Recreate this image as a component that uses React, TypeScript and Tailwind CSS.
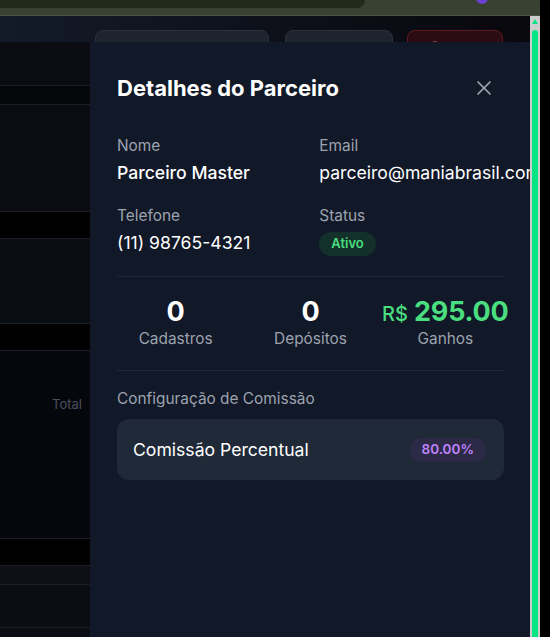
import { X, Download, RefreshCw, Trash2 } from "lucide-react";

function Row({ h, bg, children }: { h: string; bg: string; children?: React.ReactNode }) {
  return <div className={`${h} ${bg} border-b border-[#1b1e25] shrink-0`}>{children}</div>;
}

export default function App() {
  return (
    <div className="w-[550px] h-[637px] flex overflow-hidden bg-black font-['Inter',sans-serif]">
      <div className="w-[540px] flex flex-col">
        {/* browser top strip */}
        <div className="h-4 shrink-0 relative bg-[#394130] border-b border-[#4b5340] overflow-hidden">
          <div className="h-2 w-[365px] bg-[#222a1c] rounded-br-[10px]" />
          <div className="absolute left-[476px] top-[-8px] w-3 h-3 rounded-full bg-[#6b3fcf]" />
        </div>
        <div className="flex flex-1 min-h-0">
          {/* page */}
          <div className="w-[530px] relative overflow-hidden flex flex-col">
            <div className="h-[26px] shrink-0 bg-gradient-to-r from-[#131a28] to-[#08080d] flex items-start pt-[14px]">
              <div className="ml-[95px] w-[174px] h-10 rounded-lg bg-[#1e232d] border border-[#2b303b] flex items-start pt-[10px] pl-[20px] text-white">
                <Download size={14} />
              </div>
              <div className="ml-4 w-[108px] h-10 rounded-lg bg-[#1e232d] border border-[#2b303b] flex items-start pt-[10px] pl-[21px] text-white">
                <RefreshCw size={14} />
              </div>
              <div className="ml-[14px] w-[96px] h-10 rounded-lg bg-[#2a0c12] border border-[#5e1a20] flex items-start pt-[10px] pl-[20px] text-[#f87171]">
                <Trash2 size={14} />
              </div>
            </div>
            <Row h="h-[44px]" bg="bg-[#0a0c12]" />
            <Row h="h-[19px]" bg="bg-[#06070b]" />
            <Row h="h-[107px]" bg="bg-[#0b0c13]" />
            <Row h="h-[27px]" bg="bg-black" />
            <Row h="h-[85px]" bg="bg-[#0b0d15]" />
            <Row h="h-[27px]" bg="bg-[#010101]" />
            <Row h="h-[188px]" bg="bg-[#05070c]">
              <div className="w-[82px] pt-[43px] text-right text-[13px] leading-5 text-[#4b5060]">Total</div>
            </Row>
            <Row h="h-[27px]" bg="bg-black" />
            <Row h="h-[19px]" bg="bg-[#0e1016]" />
            <Row h="h-[43px]" bg="bg-[#0b0d14]" />
            <div className="flex-1 bg-[#0b0d14]" />

            {/* drawer panel */}
            <div className="absolute left-[90px] top-[26px] bottom-0 w-[440px] bg-[#111827] overflow-hidden pl-[27px] pr-[26px] pt-[31px]">
              <div className="flex items-center justify-between h-[30px]">
                <h2 className="text-[22px] leading-[30px] font-bold text-white">Detalhes do Parceiro</h2>
                <X size={24} strokeWidth={1.75} className="text-[#9ca3af] mr-[8px]" />
              </div>

              <div className="mt-[32px] grid grid-cols-2 gap-x-[17.6px] gap-y-[19px] pb-[20px] border-b border-[#1f2937]">
                <div>
                  <div className="text-[15.4px] leading-[22px] text-[#9ca3af]">Nome</div>
                  <div className="mt-[3px] text-[17.6px] leading-[26px] font-medium text-white whitespace-nowrap">Parceiro Master</div>
                </div>
                <div>
                  <div className="text-[15.4px] leading-[22px] text-[#9ca3af]">Email</div>
                  <div className="mt-[3px] text-[17.6px] leading-[26px] text-white whitespace-nowrap">parceiro@maniabrasil.com</div>
                </div>
                <div>
                  <div className="text-[15.4px] leading-[22px] text-[#9ca3af]">Telefone</div>
                  <div className="mt-[3px] text-[17.6px] leading-[26px] text-white whitespace-nowrap">(11) 98765-4321</div>
                </div>
                <div>
                  <div className="text-[15.4px] leading-[22px] text-[#9ca3af]">Status</div>
                  <div className="mt-[5px] flex">
                    <span className="h-6 px-3 rounded-full bg-[#14302a] text-[#4ade80] text-[13px] font-semibold flex items-center">Ativo</span>
                  </div>
                </div>
              </div>

              <div className="grid grid-cols-3 gap-x-[17.6px] pt-[19px] pb-[20px] border-b border-[#1f2937]">
                <div className="flex flex-col items-center">
                  <div className="h-8 text-[27px] leading-8 font-bold text-white">0</div>
                  <div className="text-[15.4px] leading-[22px] text-[#9ca3af]">Cadastros</div>
                </div>
                <div className="flex flex-col items-center">
                  <div className="h-8 text-[27px] leading-8 font-bold text-white">0</div>
                  <div className="text-[15.4px] leading-[22px] text-[#9ca3af]">Depósitos</div>
                </div>
                <div className="flex flex-col items-center">
                  <div className="h-8 text-[27px] leading-8 font-bold text-[#4ade80] whitespace-nowrap tracking-[-0.2px]">
                    <span className="text-[20px] font-medium tracking-normal mr-[6px]">R$</span>295.00
                  </div>
                  <div className="text-[15.4px] leading-[22px] text-[#9ca3af]">Ganhos</div>
                </div>
              </div>

              <div className="mt-[17px] text-[15.4px] leading-[22px] text-[#9ca3af]">Configuração de Comissão</div>
              <div className="mt-[9px] h-[61px] rounded-xl bg-[#1f2937] px-4 flex items-center justify-between">
                <span className="text-[17.6px] leading-[26px] text-white">Comissão Percentual</span>
                <span className="h-6 px-3 rounded-full bg-[#2d2a48] text-[#c084fc] text-[13.5px] font-semibold flex items-center mr-[2px]">80.00%</span>
              </div>
            </div>
          </div>
          {/* scrollbar */}
          <div className="w-[10px] bg-[#cdcdcd] flex flex-col items-center pt-[3px]">
            <div className="w-0 h-0 border-l-[3px] border-r-[3px] border-b-[5px] border-l-transparent border-r-transparent border-b-[#06e584]" />
            <div className="mt-[6px] w-[6px] flex-1 rounded-t-full bg-[#06e584]" />
          </div>
        </div>
      </div>
      <div className="w-[10px] bg-black" />
    </div>
  );
}
